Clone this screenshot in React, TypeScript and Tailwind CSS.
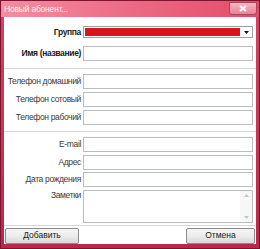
import React from "react";

// Small windows-style form dialog
const Field: React.FC<{ label: string; bold?: boolean; children?: React.ReactNode }> = ({
  label,
  bold,
  children,
}) => (
  <div className="flex items-center">
    <div
      className={`w-[79px] shrink-0 text-right pr-[2px] whitespace-nowrap text-[8.5px] leading-none tracking-[-0.35px] ${
        bold ? "font-bold text-[#1a1a1a]" : "text-[#3a3a3a]"
      }`}
    >
      {label}
    </div>
    <div className="flex-1">{children}</div>
  </div>
);

const Input: React.FC = () => <div className="h-[15px] border border-[#b9bcc2] bg-white" />;

export default function App() {
  return (
    <div
      className="w-[260px] h-[249px] flex flex-col bg-gradient-to-b from-[#d04563] to-[#b82848] border border-[#7e1430] overflow-hidden"
      style={{ fontFamily: '"Liberation Sans", Arial, sans-serif' }}
    >
      {/* title bar */}
      <div className="h-[16px] shrink-0 flex items-center justify-between bg-gradient-to-r from-[#f28ea1] via-[#ec6a84] to-[#e24c69] pl-[3px] pr-[2px]">
        <span className="text-[8.5px] text-[#fff0f3] leading-none tracking-[-0.2px]">Новый абонент...</span>
        <div className="w-[28px] h-[13px] -mt-[2px] rounded-b-[3px] border border-[#a8485a] bg-gradient-to-b from-[#f6b6c2] to-[#e6849a] flex items-center justify-center">
          <svg width="8" height="7" viewBox="0 0 8 7">
            <path d="M1 1 L7 6 M7 1 L1 6" stroke="#fff" strokeWidth="1.8" />
          </svg>
        </div>
      </div>

      {/* body */}
      <div className="flex-1 mx-[3px] mb-[4px] bg-white flex flex-col">
        <div className="pt-[9px] pr-[3px] flex flex-col gap-[8px]">
          <Field label="Группа" bold>
            <div className="h-[12px] flex border border-[#9aa0a8]">
              <div className="flex-1 bg-[#d8141c] border border-white" />
              <div className="w-[11px] bg-white flex items-center justify-center">
                <svg width="5" height="3" viewBox="0 0 5 3">
                  <path d="M0 0 H5 L2.5 3 Z" fill="#111" />
                </svg>
              </div>
            </div>
          </Field>
          <Field label="Имя (название)" bold>
            <Input />
          </Field>
        </div>

        <div className="mt-[7px] h-px bg-[#d6d6d6]" />

        <div className="pt-[5px] pr-[3px] flex flex-col gap-[3px]">
          <Field label="Телефон домашний">
            <Input />
          </Field>
          <Field label="Телефон сотовый">
            <Input />
          </Field>
          <Field label="Телефон рабочий">
            <Input />
          </Field>
        </div>

        <div className="mt-[6px] h-px bg-[#d6d6d6]" />

        <div className="pt-[5px] pr-[3px] flex flex-col gap-[2.5px]">
          <Field label="E-mail">
            <Input />
          </Field>
          <Field label="Адрес">
            <Input />
          </Field>
          <Field label="Дата рождения">
            <Input />
          </Field>
          <div className="flex">
            <div className="w-[79px] shrink-0 text-right pr-[2px] text-[8.5px] leading-none pt-[1px] tracking-[-0.35px] text-[#3a3a3a]">
              Заметки
            </div>
            <div className="flex-1 h-[33px] border border-[#b9bcc2] bg-white flex justify-end">
              <div className="w-[12px] flex flex-col items-center justify-between py-[3px] bg-[#f7f7f7]">
                <svg width="5" height="3" viewBox="0 0 5 3">
                  <path d="M0 3 H5 L2.5 0 Z" fill="#c4c4c4" />
                </svg>
                <svg width="5" height="3" viewBox="0 0 5 3">
                  <path d="M0 0 H5 L2.5 3 Z" fill="#c4c4c4" />
                </svg>
              </div>
            </div>
          </div>
        </div>

        <div className="mt-[2px] h-px bg-[#d6d6d6]" />

        <div className="flex-1 flex items-start justify-between px-[1px] pt-[2px]">
          <button className="w-[74px] h-[16px] rounded-[2px] border border-[#8a8a8a] bg-gradient-to-b from-[#f6f6f6] via-[#ececec] to-[#d8d8d8] text-[8.5px] text-[#222] leading-none">
            Добавить
          </button>
          <button className="w-[69px] h-[16px] rounded-[2px] border border-[#8a8a8a] bg-gradient-to-b from-[#f6f6f6] via-[#ececec] to-[#d8d8d8] text-[8.5px] text-[#222] leading-none">
            Отмена
          </button>
        </div>
      </div>
    </div>
  );
}
